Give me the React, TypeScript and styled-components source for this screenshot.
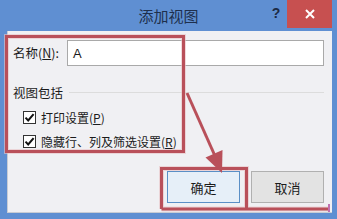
import React from "react";
import styled, { createGlobalStyle } from "styled-components";

const Global = createGlobalStyle`
  html, body {
    margin: 0;
    padding: 0;
    width: 337px;
    height: 219px;
    overflow: hidden;
    background: #5f8fd2;
  }
  * { box-sizing: border-box; }
`;

const font = `"Microsoft YaHei", "Noto Sans CJK SC", "Noto Sans", sans-serif`;

const Window = styled.div`
  position: relative;
  width: 337px;
  height: 219px;
  background: #5f8fd2;
  display: flex;
  flex-direction: column;
  font-family: ${font};
  color: #1b1b1b;
`;

const TitleBar = styled.div`
  height: 31px;
  display: flex;
  align-items: flex-start;
`;

const Title = styled.div`
  flex: 1;
  padding-left: 72px;
  padding-top: 6px;
  text-align: center;
  font-size: 15px;
  line-height: 20px;
  color: #1e2f4d;
`;

const Help = styled.div`
  width: 22px;
  padding-top: 4px;
  text-align: center;
  font-family: "Liberation Sans", sans-serif;
  font-weight: bold;
  font-size: 14px;
  line-height: 18px;
  color: #1c2a44;
`;

const Close = styled.div`
  width: 45px;
  height: 28px;
  margin-right: 5px;
  background: #c75050;
  display: flex;
  align-items: center;
  justify-content: center;
`;

const Client = styled.div`
  flex: 1;
  margin: 0 5px 6px 7px;
  background: #f0f0f3;
  box-shadow: inset 1px -1px 0 #c8ccd4;
  padding: 9px 8px 0 6px;
  display: flex;
  flex-direction: column;
  font-size: 12.5px;
`;

const NameRow = styled.div`
  display: flex;
  align-items: center;
  height: 26px;
`;

const Label = styled.span`
  width: 54px;
  line-height: 18px;
`;

const Key = styled.span`
  text-decoration: underline;
  text-underline-offset: 1px;
`;

const Input = styled.div`
  flex: 1;
  height: 26px;
  background: #fff;
  border: 1px solid #a9a9a9;
  padding-left: 5px;
  display: flex;
  align-items: center;
  font-family: "Liberation Sans", sans-serif;
  font-size: 13px;
`;

const GroupHead = styled.div`
  margin-top: 16px;
  display: flex;
  align-items: center;
  gap: 6px;
  height: 20px;

  &::after {
    content: "";
    flex: 1;
    height: 1px;
    background: #dcdcdc;
  }
`;

const Checks = styled.div`
  margin-top: 8px;
  padding-left: 10px;
  display: flex;
  flex-direction: column;
  gap: 10px;
  font-size: 12px;
`;

const CheckRow = styled.div`
  display: flex;
  align-items: center;
  gap: 5px;
  height: 14px;
`;

const Box = styled.span`
  width: 13px;
  height: 13px;
  border: 1px solid #333;
  background: #fff;
  display: flex;
  align-items: center;
  justify-content: center;
`;

const Buttons = styled.div`
  margin-top: 23px;
  display: flex;
  justify-content: flex-end;
  gap: 11px;
`;

const Button = styled.div<{ $primary?: boolean }>`
  width: 73px;
  height: 32px;
  display: flex;
  align-items: center;
  justify-content: center;
  font-size: 13px;
  background: ${(p) => (p.$primary ? "#e6eff8" : "#e3e3e3")};
  border: 1px solid ${(p) => (p.$primary ? "#5a8fc6" : "#b0b0b0")};
`;

const Overlay = styled.svg`
  position: absolute;
  left: 0;
  top: 0;
  pointer-events: none;
`;

const Check = () => (
  <svg width="11" height="11" viewBox="0 0 11 11">
    <path d="M1.5 5.6 L4.2 8.4 L9.6 2.2" fill="none" stroke="#111" strokeWidth="2" />
  </svg>
);

const red = "#b9505a";

export default function App() {
  return (
    <>
      <Global />
      <Window>
        <TitleBar>
          <Title>添加视图</Title>
          <Help>?</Help>
          <Close>
            <svg width="10" height="10" viewBox="0 0 10 10">
              <path d="M1 1 L9 9 M9 1 L1 9" stroke="#fff" strokeWidth="2" />
            </svg>
          </Close>
        </TitleBar>
        <Client>
          <NameRow>
            <Label>
              名称(<Key>N</Key>):
            </Label>
            <Input>A</Input>
          </NameRow>
          <GroupHead>视图包括</GroupHead>
          <Checks>
            <CheckRow>
              <Box>
                <Check />
              </Box>
              <span>
                打印设置(<Key>P</Key>)
              </span>
            </CheckRow>
            <CheckRow>
              <Box>
                <Check />
              </Box>
              <span>
                隐藏行、列及筛选设置(<Key>R</Key>)
              </span>
            </CheckRow>
          </Checks>
          <Buttons>
            <Button $primary>确定</Button>
            <Button>取消</Button>
          </Buttons>
        </Client>
        <Overlay width="337" height="219" viewBox="0 0 337 219">
          <g fill="none" stroke="#e9c3c6" strokeWidth="5" opacity="0.6">
            <rect x="6.5" y="36.5" width="177" height="115" />
            <path d="M161.5 209 V168.5 H246.5 V209 M161.5 209 H329" />
          </g>
          <g fill="none" stroke={red} strokeWidth="3">
            <rect x="6.5" y="36.5" width="177" height="115" />
            <path d="M161.5 209 V168.5 H246.5 V209 M161.5 209 H329" />
            <line x1="187" y1="93" x2="215" y2="156" />
          </g>
          <path d="M329 204 V212" stroke="#c070b0" strokeWidth="2" />
          <polygon points="222,173 205.5,157.5 222.5,150" fill={red} />
        </Overlay>
      </Window>
    </>
  );
}
